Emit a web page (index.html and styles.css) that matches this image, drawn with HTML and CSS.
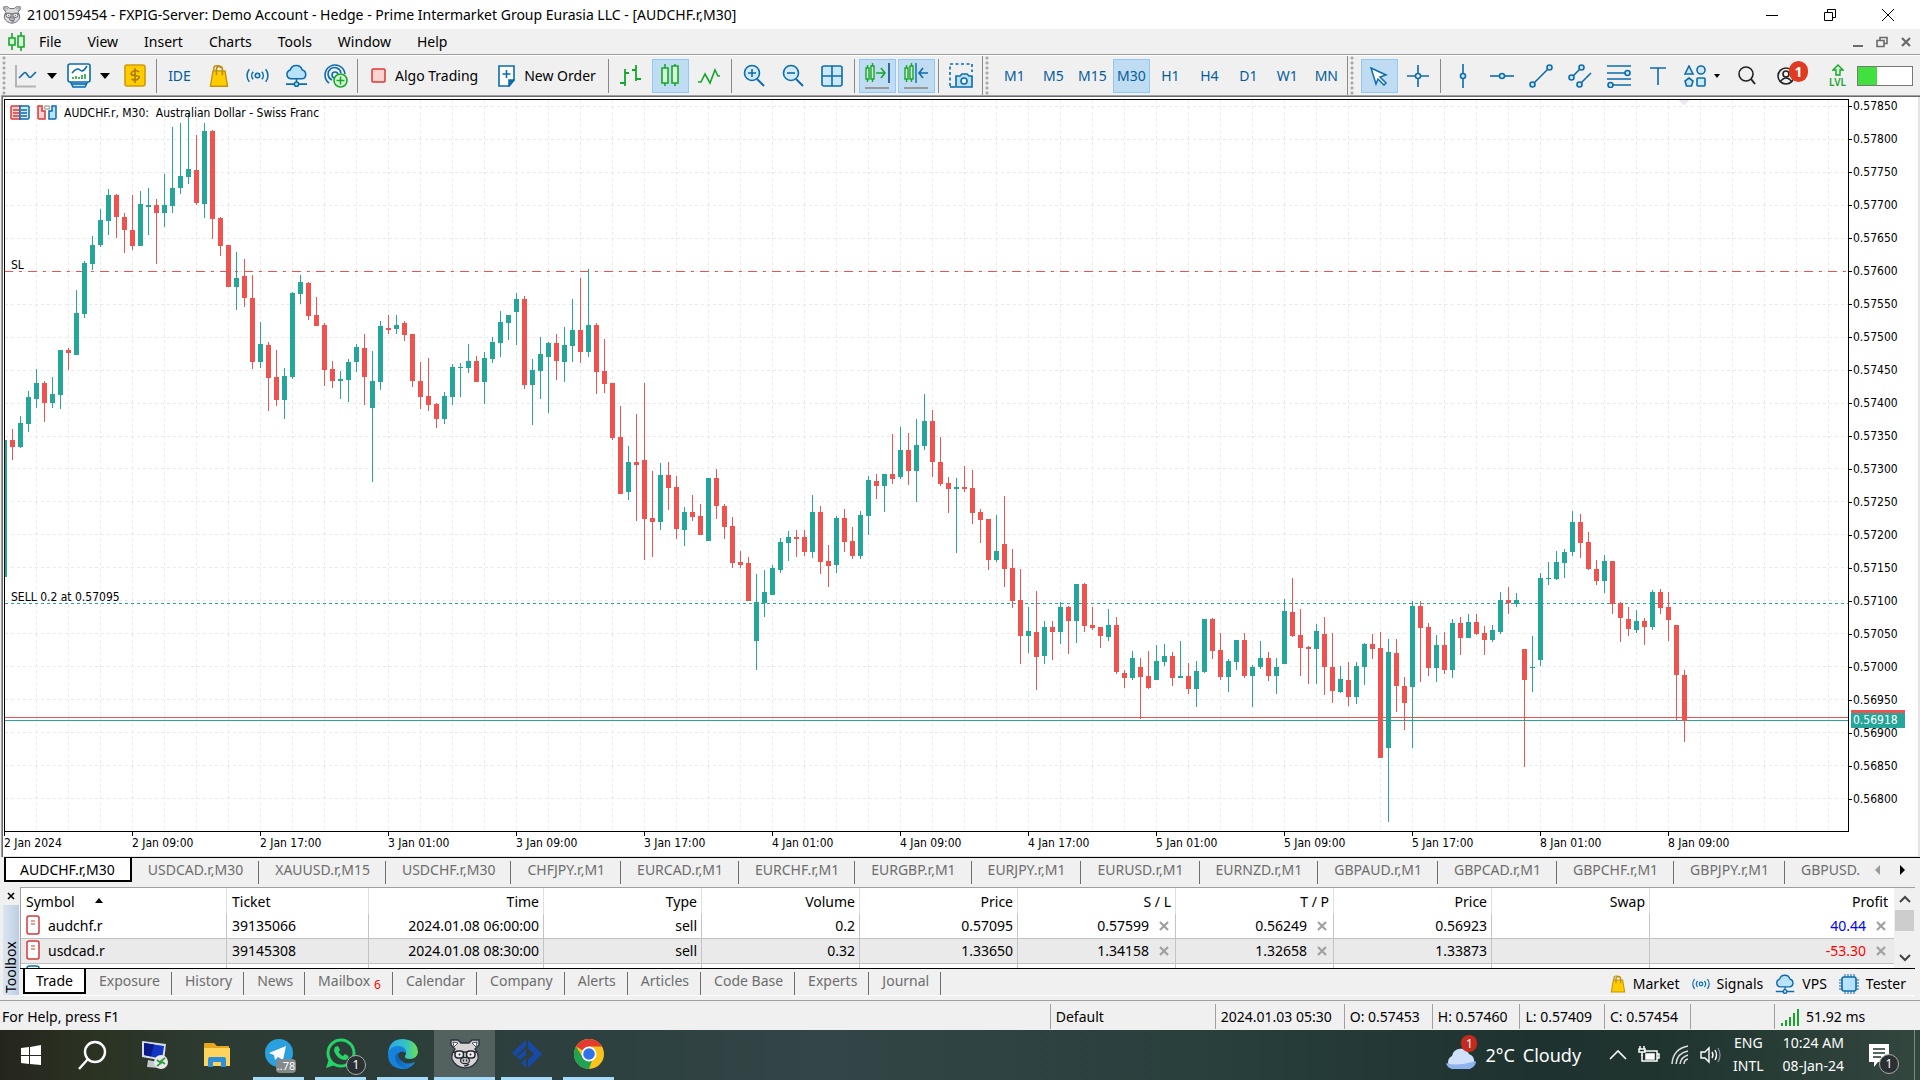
FILE: index.html
```html
<!DOCTYPE html>
<html lang="en">
<head>
<meta charset="utf-8">
<title>2100159454 - FXPIG-Server: Demo Account</title>
<link rel="stylesheet" href="styles.css">
</head>
<body>
<svg class="sprite" aria-hidden="true">
  <symbol id="bag" viewBox="0 0 24 28">
    <path d="M6 10V5q0-3 3-3h2q3 0 3 3" fill="none" stroke="#c4930a" stroke-width="1.800"/>
    <path d="M5 8h14l3 18H2z" fill="#fc0" stroke="#c4930a" stroke-width="1.600"/>
    <path d="M9 13V6q0-3 3-3h1q3 0 3 3v7" fill="none" stroke="#b98a0a" stroke-width="1.800"/>
  </symbol>
  <symbol id="signal" viewBox="0 0 24 24">
    <g fill="none" stroke="#0c6cad" stroke-width="1.6">
      <circle cx="12" cy="12" r="2.4" fill="#cdeafd"/>
      <path d="M7.500 8a6 6 0 0 0 0 8M16.500 8a6 6 0 0 1 0 8M3.500 5.500a10 10 0 0 0 0 13M20.500 5.500a10 10 0 0 1 0 13"/>
    </g>
  </symbol>
  <symbol id="cloud" viewBox="0 0 24 24">
    <path d="M6 15.500a4.800 4.800 0 0 1-.5-9.300 6.500 6.500 0 0 1 12.500 0 4.800 4.800 0 0 1 0 9.300z" fill="#b9e2fd" stroke="#0c6cad" stroke-width="1.600"/>
    <path d="M12 15.500v4M1 21h8.500M14.500 21H23" fill="none" stroke="#0c6cad" stroke-width="1.600"/>
    <circle cx="12" cy="21" r="2.200" fill="#b9e2fd" stroke="#0c6cad" stroke-width="1.600"/>
  </symbol>
  <symbol id="pig" viewBox="0 0 32 34">
    <path d="M2 8L2 3l7 0 3 3h8l3-3 7 0v5l-4 4q4 5 3 10-3 8-13 9-10-1-13-9-1-5 3-10z" fill="#d9d4d4" stroke="#2b3340" stroke-width="1.400"/>
    <path d="M4 5l5 1-4 4zM28 5l-5 1 4 4z" fill="#fff" stroke="#2b3340" stroke-width=".8"/>
    <path d="M4 15h24" stroke="#20262f" stroke-width="1.400"/>
    <rect x="6" y="14" width="8.500" height="7" rx="3" fill="#eee" stroke="#20262f" stroke-width="1.500"/>
    <rect x="17.500" y="14" width="8.500" height="7" rx="3" fill="#eee" stroke="#20262f" stroke-width="1.500"/>
    <circle cx="10.500" cy="17.500" r="1" fill="#20262f"/><circle cx="21.500" cy="17.500" r="1" fill="#20262f"/>
    <ellipse cx="16" cy="23.500" rx="4.500" ry="3.200" fill="#c9c3c3" stroke="#20262f" stroke-width="1.200"/>
    <path d="M14.500 22.500v2M17.500 22.500v2M15 29q3 0 5-2" stroke="#20262f" stroke-width="1.200" fill="none"/>
  </symbol>
  <symbol id="cross" viewBox="0 0 10 10"><path d="M1 1l8 8M9 1l-8 8" stroke="#a0a0a0" stroke-width="2.200"/></symbol>
  <symbol id="doc" viewBox="0 0 14 20"><rect x="1" y="1" width="12" height="18" rx="2" fill="#fff" stroke="#d63a3a" stroke-width="1.500"/><path d="M5 6h4M5 9h4" stroke="#d63a3a" stroke-width="1.200"/></symbol>
</svg>

<header class="titlebar">
  <svg class="app-icon" width="20" height="20"><use href="#pig"/></svg>
  <h1>2100159454 - FXPIG-Server: Demo Account - Hedge - Prime Intermarket Group Eurasia LLC - [AUDCHF.r,M30]</h1>
  <div class="window-controls">
    <button aria-label="Minimize"><svg width="14" height="14"><path d="M1 7.500h12" stroke="#000"/></svg></button>
    <button aria-label="Restore"><svg width="14" height="14" fill="none" stroke="#000"><path d="M1.500 4.500h8v8h-8zM4.500 4V1.500h8v8H10"/></svg></button>
    <button aria-label="Close"><svg width="14" height="14" stroke="#000"><path d="M1 1l12 12M13 1L1 13"/></svg></button>
  </div>
</header>

<nav class="menubar">
  <svg width="17" height="20" fill="#d4fbd6" stroke="#18a52c" stroke-width="1.600"><path d="M4 1v17M13 0v19"/><path d="M1 6h6v7H1zM10 4h6v11h-6z"/></svg>
  <a href="#">File</a><a href="#">View</a><a href="#">Insert</a><a href="#">Charts</a><a href="#">Tools</a><a href="#">Window</a><a href="#">Help</a>
  <div class="child-controls">
    <button aria-label="Minimize chart"><svg width="12" height="12"><path d="M1 10h10" stroke="#6a6a6a" stroke-width="2"/></svg></button>
    <button aria-label="Restore chart"><svg width="12" height="12" fill="none" stroke="#6a6a6a" stroke-width="1.600"><path d="M1 4.500h7v6H1zM4 4V1.500h7v6H8.500"/></svg></button>
    <button aria-label="Close chart"><svg width="12" height="12"><path d="M2 2l8 8M10 2l-8 8" stroke="#6a6a6a" stroke-width="2.200"/></svg></button>
  </div>
</nav>

<div class="toolbar">
  <span class="handle"></span>
  <button class="drop" aria-label="New chart"><svg width="24" height="26" fill="none"><path d="M2 2v22M1 23.500h21" stroke="#b4b4b4" stroke-width="2"/><path d="M5 15l5-5q1-1 2 0l3 4q1 1 2 0l5-5" stroke="#0c6cad" stroke-width="1.600"/></svg><i class="caret"></i></button>
  <button class="drop" aria-label="Profiles"><svg width="24" height="26" fill="none" stroke="#0c6cad" stroke-width="1.600"><path d="M3 18l3 6h12l3-6" fill="#b9e2fd"/><path d="M5 21h14"/><rect x="1" y="1" width="22" height="18" rx="2" fill="#fff"/><path d="M5 10q5-6 8-3t7-4"/><path d="M6 16v-2M9 16v-3M12 16v-2M15 16v-4M18 16v-5" stroke="#18a52c"/></svg><i class="caret"></i></button>
  <button aria-label="Symbols"><svg width="22" height="24"><rect x="1" y="1" width="20" height="21" rx="2" fill="#fc0" stroke="#d09a0a" stroke-width="1.600"/><path d="M11 4v15M15 8q-4-3-7 0t3 3.500 3.500 3q-3 3-7 .5" fill="none" stroke="#a87b05" stroke-width="1.600"/></svg></button>
  <span class="sep"></span>
  <button class="blue">IDE</button>
  <button aria-label="Market"><svg width="22" height="24"><use href="#bag"/></svg></button>
  <button aria-label="Signals"><svg width="23" height="23"><use href="#signal"/></svg></button>
  <button aria-label="VPS"><svg width="23" height="23"><use href="#cloud"/></svg></button>
  <button aria-label="Community"><svg width="24" height="26" fill="none" stroke="#0c6cad" stroke-width="1.600"><path d="M5 20a10 10 0 1 1 16-9M8 17a6.500 6.500 0 1 1 9-7"/><circle cx="11" cy="12" r="3"/><circle cx="16.500" cy="17.500" r="6.500" fill="#d4fbd6" stroke="#18a52c"/><path d="M16.500 13.500v8M12.500 17.500h8" stroke="#18a52c"/></svg></button>
  <span class="sep"></span>
  <button class="labelled"><svg width="15" height="15"><rect x="1" y="1" width="13" height="13" rx="1" fill="#ffd3cf" stroke="#d63a3a" stroke-width="1.500"/></svg>Algo Trading</button>
  <button class="labelled"><svg width="17" height="22" fill="none" stroke="#0c6cad" stroke-width="1.600"><path d="M1 1h15v14l-5 6H1z" fill="#fff"/><path d="M16 15h-5v6z" fill="#0c6cad"/><path d="M8.500 5v8M4.500 9h8"/></svg>New Order</button>
  <span class="sep"></span>
  <button aria-label="Bars"><svg width="22" height="22" fill="none" stroke="#18a52c" stroke-width="1.800"><path d="M5 4v17M0 18h5M5 8h4M16 0v16M12 5h4M16 14h5"/></svg></button>
  <button class="on" aria-label="Candlesticks"><svg width="20" height="24" fill="#d4fbd6" stroke="#18a52c" stroke-width="1.600"><path d="M5 0v22M15 0v22"/><path d="M2 4h6v15H2zM12 2h6v17h-6z"/></svg></button>
  <button aria-label="Line chart"><svg width="22" height="18" fill="none" stroke="#18a52c" stroke-width="1.600"><path d="M0 15h3l4-8 5 9 5-13 3 6h2"/></svg></button>
  <span class="sep"></span>
  <button aria-label="Zoom in"><svg width="22" height="24" fill="none" stroke="#0c6cad" stroke-width="1.600"><path d="M14 15l7 7" stroke-width="2"/><circle cx="9" cy="9" r="7.500" fill="#d2ecfd"/><path d="M9 5v8M5 9h8"/></svg></button>
  <button aria-label="Zoom out"><svg width="22" height="24" fill="none" stroke="#0c6cad" stroke-width="1.600"><path d="M14 15l7 7" stroke-width="2"/><circle cx="9" cy="9" r="7.500" fill="#d2ecfd"/><path d="M5 9h8"/></svg></button>
  <button aria-label="Tile windows"><svg width="22" height="22" fill="#cfe9fc" stroke="#0c6cad" stroke-width="1.600"><rect x="1" y="1" width="20" height="20" rx="2"/><path d="M11 1v20M1 11h20"/></svg></button>
  <span class="sep"></span>
  <button class="on" aria-label="Auto scroll"><svg width="26" height="26" fill="none" stroke="#18a52c" stroke-width="1.400"><path d="M3.500 2v17M8.500 0v19"/><path d="M2 5h3v11H2zM7 3h3v13H7z" fill="#d4fbd6"/><path d="M12 10h9M17 5l4 5-4 5" stroke-width="1.600"/><path d="M25 0v20" stroke="#0c4c8d" stroke-width="1.600"/><path d="M1 25h24" stroke="#999" stroke-width="2"/></svg></button>
  <button class="on" aria-label="Chart shift"><svg width="26" height="26" fill="none" stroke="#18a52c" stroke-width="1.400"><path d="M3.500 2v17M8.500 0v19"/><path d="M2 5h3v11H2zM7 3h3v13H7z" fill="#d4fbd6"/><path d="M13 0v20" stroke="#0c6cad"/><path d="M25 10h-9M20 5l-4 5 4 5" stroke="#0c6cad" stroke-width="1.600"/><path d="M1 25h24" stroke="#999" stroke-width="2"/></svg></button>
  <span class="sep"></span>
  <button aria-label="Screenshot"><svg width="24" height="26" fill="none" stroke="#0c6cad" stroke-width="1.600"><path d="M1 23V1h22v8" stroke-dasharray="3 2.500"/><path d="M1 24h5" /><path d="M7 13h4l2-2h5l2 2h3v11H7z" fill="#b9e2fd"/><circle cx="15" cy="18" r="3" fill="#fff"/></svg></button>
  <span class="sep full"></span>
  <span class="handle"></span>
  <button class="blue">M1</button><button class="blue">M5</button><button class="blue">M15</button><button class="blue on">M30</button><button class="blue">H1</button><button class="blue">H4</button><button class="blue">D1</button><button class="blue">W1</button><button class="blue">MN</button>
  <span class="sep full"></span>
  <span class="handle"></span>
  <button class="on" aria-label="Cursor"><svg width="18" height="20"><path d="M1 2l15 7-6 2 6 6-2 2-6-6-2 5z" fill="#fff" stroke="#0c6cad" stroke-width="1.500"/></svg></button>
  <button aria-label="Crosshair"><svg width="22" height="22" fill="#fff" stroke="#0c6cad" stroke-width="1.600"><path d="M11 0v22M0 11h22"/><circle cx="11" cy="11" r="2.500"/></svg></button>
  <span class="sep"></span>
  <button aria-label="Vertical line"><svg width="22" height="24" fill="#cfe9fc" stroke="#0c6cad" stroke-width="1.600"><path d="M11 0v24"/><circle cx="11" cy="12" r="2.500"/></svg></button>
  <button aria-label="Horizontal line"><svg width="24" height="22" fill="#cfe9fc" stroke="#0c6cad" stroke-width="1.600"><path d="M0 11h24"/><circle cx="12" cy="11" r="2.500"/></svg></button>
  <button aria-label="Trend line"><svg width="24" height="24" fill="#cfe9fc" stroke="#0c6cad" stroke-width="1.600"><path d="M3 21L21 3"/><circle cx="3.500" cy="20.500" r="2.500"/><circle cx="20.500" cy="3.500" r="2.500"/></svg></button>
  <button aria-label="Channel"><svg width="24" height="24" fill="#cfe9fc" stroke="#0c6cad" stroke-width="1.600"><path d="M3 14L14 3M11 21L23 9"/><circle cx="3.500" cy="13.500" r="2.500"/><circle cx="13.500" cy="3.500" r="2.500"/><circle cx="11.500" cy="20.500" r="2.500"/></svg></button>
  <button aria-label="Fibonacci"><svg width="24" height="24" fill="#cfe9fc" stroke="#0c6cad" stroke-width="1.600"><path d="M0 2h24M0 9h20M0 15h24M4 21h20"/><circle cx="20.500" cy="9" r="2.500"/><circle cx="3.500" cy="21" r="2.500"/></svg></button>
  <button aria-label="Text"><svg width="18" height="18" stroke="#0c6cad" stroke-width="1.600"><path d="M1 1h16M9 1v17"/></svg></button>
  <button class="shapes" aria-label="Objects"><svg width="22" height="22" fill="#cfe9fc" stroke="#0c6cad" stroke-width="1.600"><path d="M5 1l4 8H1zM5 13l4 3-1.500 5h-5L1 16z"/><circle cx="17" cy="5" r="4"/><rect x="13" y="13" width="8" height="8" rx="1"/></svg><i class="caret small"></i></button>
  <div class="tool-end">
    <button aria-label="Search"><svg width="18" height="20" fill="none" stroke="#222" stroke-width="1.600"><circle cx="8" cy="8" r="7"/><path d="M13 13l4 5" stroke-width="2"/></svg></button>
    <button class="account" aria-label="Account, 1 notification"><svg width="18" height="18" fill="none" stroke="#222" stroke-width="1.600"><circle cx="9" cy="9" r="8"/><circle cx="9" cy="7" r="3"/><path d="M3 15q6-8 12 0"/></svg><b>1</b></button>
    <button class="level"><svg width="12" height="12" fill="#d4fbd6" stroke="#18a52c" stroke-width="1.400"><path d="M6 1L1 6h3v5h4V6h3z"/></svg>LVL</button>
    <div class="meter"><span></span></div>
  </div>
</div>

<main class="chart">
  <div class="plot">
    <svg class="canvas" id="canvas" aria-label="AUDCHF.r M30 candlestick chart"></svg>
    <div class="caption">
      <svg width="20" height="16" stroke-width="1.500"><path d="M10 1H2q-1 0-1 1v11q0 1 1 1h8z" fill="#ffd3cf" stroke="#d63a3a"/><path d="M10 1h8q1 0 1 1v11q0 1-1 1h-8z" fill="#d2ecfd" stroke="#0c6cad"/><path d="M3 5h6M3 8h6M3 11h6" stroke="#d63a3a"/><path d="M11 5h6M11 8h6M11 11h6" stroke="#0c6cad"/></svg>
      <svg width="20" height="16" stroke-width="1.500"><path d="M1 1h4v5h3v8H2q-1 0-1-1z" fill="#ffd3cf" stroke="#d63a3a"/><path d="M19 1h-4v5h-3v8h6q1 0 1-1z" fill="#b9e2fd" stroke="#0c6cad"/><rect x="7.500" y="1" width="5" height="3" rx="1" fill="#fff" stroke="#aaa"/></svg>
      <span>AUDCHF.r, M30:&nbsp; Australian Dollar - Swiss Franc</span>
    </div>
  </div>
  <ol class="prices">
    <li>0.57850</li><li>0.57800</li><li>0.57750</li><li>0.57700</li><li>0.57650</li><li>0.57600</li><li>0.57550</li><li>0.57500</li><li>0.57450</li><li>0.57400</li><li>0.57350</li><li>0.57300</li><li>0.57250</li><li>0.57200</li><li>0.57150</li><li>0.57100</li><li>0.57050</li><li>0.57000</li><li>0.56950</li><li>0.56900</li><li>0.56850</li><li>0.56800</li>
    <li class="tag ask" aria-hidden="true"></li><li class="tag bid">0.56918</li>
  </ol>
  <ol class="times">
    <li>2 Jan 2024</li><li>2 Jan 09:00</li><li>2 Jan 17:00</li><li>3 Jan 01:00</li><li>3 Jan 09:00</li><li>3 Jan 17:00</li><li>4 Jan 01:00</li><li>4 Jan 09:00</li><li>4 Jan 17:00</li><li>5 Jan 01:00</li><li>5 Jan 09:00</li><li>5 Jan 17:00</li><li>8 Jan 01:00</li><li>8 Jan 09:00</li>
  </ol>
</main>

<nav class="tabs chart-tabs">
  <a class="active" href="#">AUDCHF.r,M30</a><a href="#">USDCAD.r,M30</a><a href="#">XAUUSD.r,M15</a><a href="#">USDCHF.r,M30</a><a href="#">CHFJPY.r,M1</a><a href="#">EURCAD.r,M1</a><a href="#">EURCHF.r,M1</a><a href="#">EURGBP.r,M1</a><a href="#">EURJPY.r,M1</a><a href="#">EURUSD.r,M1</a><a href="#">EURNZD.r,M1</a><a href="#">GBPAUD.r,M1</a><a href="#">GBPCAD.r,M1</a><a href="#">GBPCHF.r,M1</a><a href="#">GBPJPY.r,M1</a><a href="#">GBPUSD.</a>
  <div class="scrollers">
    <button aria-label="Scroll left"><svg width="6" height="10"><path d="M5 0v10L0 5z" fill="#999"/></svg></button>
    <button aria-label="Scroll right"><svg width="6" height="10"><path d="M1 0v10l5-5z" fill="#000"/></svg></button>
  </div>
</nav>

<section class="toolbox">
  <div class="side">
    <button aria-label="Close toolbox"><svg width="8" height="8"><path d="M1 1l6 6M7 1L1 7" stroke="#000" stroke-width="1.600"/></svg></button>
    <span>Toolbox</span>
  </div>
  <div class="body">
    <div class="sheet">
      <table>
        <colgroup><col class="c-symbol"><col class="c-ticket"><col class="c-time"><col class="c-num"><col class="c-num"><col class="c-num"><col class="c-num"><col class="c-num"><col class="c-num"><col class="c-num"><col></colgroup>
        <thead><tr><th>Symbol<i class="sort"></i></th><th>Ticket</th><th>Time</th><th>Type</th><th>Volume</th><th>Price</th><th>S / L</th><th>T / P</th><th>Price</th><th>Swap</th><th>Profit</th></tr></thead>
        <tbody>
          <tr><td><svg width="14" height="20"><use href="#doc"/></svg>audchf.r</td><td>39135066</td><td>2024.01.08 06:00:00</td><td>sell</td><td>0.2</td><td>0.57095</td><td>0.57599<svg class="x"><use href="#cross"/></svg></td><td>0.56249<svg class="x"><use href="#cross"/></svg></td><td>0.56923</td><td></td><td class="gain">40.44<svg class="x"><use href="#cross"/></svg></td></tr>
          <tr><td><svg width="14" height="20"><use href="#doc"/></svg>usdcad.r</td><td>39145308</td><td>2024.01.08 08:30:00</td><td>sell</td><td>0.32</td><td>1.33650</td><td>1.34158<svg class="x"><use href="#cross"/></svg></td><td>1.32658<svg class="x"><use href="#cross"/></svg></td><td>1.33873</td><td></td><td class="loss">-53.30<svg class="x"><use href="#cross"/></svg></td></tr>
          <tr class="peek"><td><svg width="14" height="4"><path d="M1 4q0-2 3-2h6q3 0 3 2" fill="none" stroke="#0c6cad" stroke-width="1.500"/></svg></td><td></td><td></td><td></td><td></td><td></td><td></td><td></td><td></td><td></td><td></td></tr>
        </tbody>
      </table>
      <div class="scrollbar">
        <svg width="12" height="8"><path d="M1 7l5-5 5 5" fill="none" stroke="#444" stroke-width="2"/></svg>
        <span></span>
        <svg width="12" height="8"><path d="M1 1l5 5 5-5" fill="none" stroke="#444" stroke-width="2"/></svg>
      </div>
    </div>
    <nav class="tabs box-tabs">
      <a class="active" href="#">Trade</a><a href="#">Exposure</a><a href="#">History</a><a href="#">News</a><a href="#">Mailbox<sub>6</sub></a><a href="#">Calendar</a><a href="#">Company</a><a href="#">Alerts</a><a href="#">Articles</a><a href="#">Code Base</a><a href="#">Experts</a><a href="#">Journal</a>
      <div class="links">
        <button><svg width="16" height="20"><use href="#bag"/></svg>Market</button>
        <button><svg width="18" height="18"><use href="#signal"/></svg>Signals</button>
        <button><svg width="20" height="20"><use href="#cloud"/></svg>VPS</button>
        <button><svg width="20" height="20"><path d="M6 0v20M9 0v20M12 0v20M15 0v20M0 6h20M0 9h20M0 12h20M0 15h20" stroke="#0c6cad"/><rect x="3" y="3" width="14" height="14" rx="2" fill="#b9e2fd" stroke="#0c6cad" stroke-width="1.600"/></svg>Tester</button>
      </div>
    </nav>
  </div>
</section>

<footer class="status">
  <span class="help">For Help, press F1</span><span class="profile">Default</span><span>2024.01.03 05:30</span><span>O: 0.57453</span><span>H: 0.57460</span><span>L: 0.57409</span><span>C: 0.57454</span><span class="blank"></span>
  <span class="ping"><svg width="18" height="18" stroke="#18a52c" stroke-width="2"><path d="M1 18v-3M5 18v-6M9 18V9M13 18V5M17 18V1"/></svg>51.92 ms</span>
</footer>

<div class="taskbar">
  <div class="apps">
    <button aria-label="Start"><svg width="20" height="20" fill="#fff"><path d="M0 3l8-1v8H0zM9 2l11-2v10H9zM0 11h8v8l-8-1zM9 11h11v9L9 19z"/></svg></button>
    <button aria-label="Search"><svg width="30" height="30" fill="none" stroke="#fff" stroke-width="2.400"><circle cx="17" cy="12" r="10"/><path d="M10 19l-9 10"/></svg></button>
    <button aria-label="Remote Desktop"><svg width="30" height="30"><path d="M2 1l24 3-2 17L2 17z" fill="#d5dde8"/><path d="M4 3l20 3-2 13L4 15z" fill="#1335c4"/><path d="M4 3l10 1.500-3 12L4 15z" fill="#0a1a86"/><path d="M8 20l10 2 1 6-12-1z" fill="#c3c8cd"/><circle cx="21" cy="22" r="7" fill="#e8e8e8"/><path d="M17 20l4 3-4 3M25 18l-4 3 4 3" fill="none" stroke="#2b9a3a" stroke-width="1.600"/></svg></button>
    <button aria-label="File Explorer"><svg width="28" height="26"><path d="M1 2q0-1 1-1h9l3 3h12v5H1z" fill="#e6a51c"/><path d="M1 6h26v18H1z" fill="#ffd45c"/><path d="M5 25v-8q0-2 2-2h14q2 0 2 2v8h-5v-5h-8v5z" fill="#2b8fdc"/></svg></button>
    <button class="run" aria-label="Telegram"><svg width="36" height="34"><circle cx="18" cy="16" r="14" fill="#2aa1de"/><path d="M8 16l17-7-3 14-5-3-3 3-1-5z" fill="#fff"/></svg><b class="pill">..78</b></button>
    <button class="run" aria-label="WhatsApp"><svg width="36" height="34"><circle cx="18" cy="16" r="13" fill="none" stroke="#25d366" stroke-width="3"/><path d="M3 31l3-9 6 6z" fill="#25d366"/><path d="M12 10l3-1 2 4-1.500 2q2 3 4.500 4l2-2 3.500 2q0 3-3 4-8 0-11.500-9 0-2 1-4z" fill="#25d366"/></svg><b class="count">1</b></button>
    <button class="run" aria-label="Edge">
      <svg width="32" height="32">
        <defs>
          <linearGradient id="edge-top"><stop offset="0" stop-color="#2aa8e8"/><stop offset=".6" stop-color="#35c3c4"/><stop offset="1" stop-color="#6be04f"/></linearGradient>
          <linearGradient id="edge-low"><stop offset="0" stop-color="#0f5fb4"/><stop offset="1" stop-color="#1a8fe0"/></linearGradient>
        </defs>
        <path d="M1 16Q2 1 16 1q14 1 15 13-1 7-8 7-6 0-5-3 3-4-2-7-8-2-15 5z" fill="url(#edge-top)"/>
        <path d="M1 16Q3 8 11 8q8 0 8 7-6-4-8 2-1 9 9 10 4 0 8-3-5 8-14 7Q1 29 1 16z" fill="#1583dc"/>
        <path d="M11 14q-4 3-2 9 3 7 11 7 5-1 8-6-7 3-12 0-6-4-5-10z" fill="url(#edge-low)"/>
      </svg>
    </button>
    <button class="run current" aria-label="FXPIG terminal"><svg width="32" height="34"><use href="#pig"/></svg></button>
    <button class="run" aria-label="Trading app"><svg width="30" height="28" fill="#1749a8"><path d="M14 0v6L4 16l-4-3zM14 9v6l-6 5-3-3zM14 18v10l-5-5zM16 0l14 14-14 14v-8l6-6-6-6z"/></svg></button>
    <button class="run" aria-label="Chrome"><svg width="32" height="32"><circle cx="16" cy="16" r="15" fill="#f9c31b"/><path d="M16 16L3 8.500A15 15 0 0 1 29 8.500H16z" fill="#e33b2e"/><path d="M16 31A15 15 0 0 1 3 8.500l7 11 9 3z" fill="#21a152"/><circle cx="16" cy="16" r="7.500" fill="#fff"/><circle cx="16" cy="16" r="5.800" fill="#2f73e8"/></svg></button>
  </div>
  <div class="tray">
    <button class="weather"><svg width="32" height="32"><path d="M8 30a7 7 0 0 1-1-13 9 9 0 0 1 17-2 8 8 0 0 1 0 15z" fill="#cfe0fa"/><path d="M8 30a7 7 0 0 1-7-6q10 4 30-2a8 8 0 0 1-7 8z" fill="#8fb3ee"/></svg><b>1</b><span>2°C</span><span>Cloudy</span></button>
    <svg width="18" height="12" fill="none" stroke="#fff" stroke-width="1.600"><path d="M1 10l8-8 8 8"/></svg>
    <svg width="22" height="18" fill="none" stroke="#fff" stroke-width="1.500"><path d="M6 5h13v10H4V9M19 8h2v4h-2"/><path d="M8 8h8v5H8z" fill="#fff"/><path d="M2 0v3M6 0v3M1 3h6v3H1zM4 6v4"/></svg>
    <svg width="18" height="20" fill="none" stroke="#ddd" stroke-width="1.500"><path d="M1 19Q2 4 17 1M5 19Q6 8 17 6M9 19q1-7 8-9M13 19q0-4 4-5"/></svg>
    <svg width="22" height="18" fill="none" stroke="#fff" stroke-width="1.400"><path d="M1 6h4l4-4v14l-4-4H1z"/><path d="M12 6q2 3 0 6M15 4q3 5 0 10"/><path d="M18 2q4 7 0 14" stroke="#889"/></svg>
    <div class="stack lang"><span>ENG</span><span>INTL</span></div>
    <div class="stack clock"><span>10:24 AM</span><span>08-Jan-24</span></div>
    <button class="notes" aria-label="Notifications"><svg width="22" height="24"><path d="M1 1h20v18H10l-4 5v-5H1z" fill="#fff"/><path d="M5 6h12M5 10h12M5 14h8" stroke="#24352f" stroke-width="1.400"/></svg><b class="count">1</b></button>
  </div>
</div>
<script src="chart.js"></script>
</body>
</html>
```
FILE: chart.js
```js
// One row per half-hour candle, in plot pixels: direction, high, body top, body bottom, low.
const candles = `
u 340 340 477 477|d 329 340 347 360|u 316 323 347 348|u 291 297 324 332|u 269 283 299 308|d 281 283 303 322
u 277 294 303 308|u 250 250 295 309|d 248 250 253 270|u 190 213 255 255|u 161 163 214 218|u 136 145 164 170
u 109 120 145 147|u 89 95 121 135|d 94 95 117 138|d 113 117 130 153|d 95 130 146 150|u 91 104 146 146
u 88 105 107 135|d 99 105 113 164|u 74 105 113 127|u 27 88 106 113|u 23 76 88 94|u 14 69 77 84
d 35 70 103 105|u 23 31 104 118|d 30 31 119 139|d 117 118 146 156|d 145 145 187 187|u 152 178 187 210
d 159 176 198 207|d 175 198 262 269|u 222 244 262 268|d 242 245 278 311|d 250 277 300 306|u 268 276 300 319
u 192 193 277 279|u 175 182 194 204|d 182 183 216 220|d 197 215 226 226|d 223 225 270 286|d 261 269 281 288
u 271 279 281 299|u 259 262 280 302|u 244 247 262 272|d 234 248 277 305|u 251 281 308 382|u 221 226 282 290
d 215 228 230 234|u 215 225 229 234|d 221 223 235 241|d 234 234 281 287|d 262 281 297 309|d 258 296 305 311
d 303 304 319 328|u 292 296 319 324|u 264 267 297 305|u 263 267 268 297|u 244 261 268 273|d 256 261 282 282
u 252 258 282 304|u 237 242 259 263|u 211 222 243 257|u 215 215 223 240|u 193 199 212 245|d 196 199 285 289
u 259 270 285 325|u 237 254 271 299|u 242 243 257 313|d 234 243 261 280|u 227 245 262 282|u 199 230 246 262
d 178 230 252 263|u 169 225 252 257|d 223 225 272 294|d 239 271 284 293|d 283 283 338 340|d 306 337 394 394
u 346 362 392 400|d 314 362 365 421|d 283 360 419 460|d 371 418 422 457|u 363 375 422 430|d 362 375 388 410
d 376 387 429 439|u 407 412 430 446|d 395 412 417 421|d 404 416 435 435|u 378 378 441 441|d 369 378 406 419
d 404 406 427 439|d 417 426 463 468|d 451 462 465 468|d 457 463 501 501|u 474 502 541 570|u 470 492 503 517
u 465 468 495 495|u 438 442 470 473|u 431 437 443 461|d 430 437 439 457|d 430 437 452 456|u 395 412 452 458
d 406 412 462 474|d 445 461 466 487|u 416 418 465 473|d 409 418 442 452|d 427 441 456 459|u 411 415 456 459
u 376 380 416 435|d 374 381 386 399|u 374 374 386 412|d 334 374 379 384|u 327 350 377 379|d 333 350 371 385
u 319 345 371 402|u 294 321 346 350|d 310 321 362 377|d 337 362 384 386|d 377 383 389 413|u 378 387 389 453
d 366 387 389 392|d 370 388 413 424|d 409 412 420 443|d 419 419 460 470|u 415 451 460 462|d 396 444 469 487
d 449 468 501 508|d 469 500 536 564|u 507 531 536 553|d 491 532 557 590|u 521 527 556 564|d 521 527 532 560
u 502 507 532 544|d 506 507 521 554|u 484 484 521 543|d 483 484 526 532|d 507 525 528 530|d 527 527 536 548
u 509 525 537 541|d 517 525 572 574|d 570 573 578 588|u 551 558 578 580|d 558 567 577 619|d 551 576 588 589
u 545 561 580 580|u 544 556 562 566|d 552 556 578 586|u 541 576 578 578|d 563 576 589 594|u 561 571 589 607
u 519 519 572 573|d 518 519 551 559|d 533 550 577 580|u 559 561 577 592|u 540 540 562 570|d 533 540 576 578
u 565 567 576 607|u 541 558 567 569|d 552 558 576 581|u 558 567 576 594|u 499 511 564 564|d 478 512 536 537
d 509 535 548 576|d 546 547 549 584|u 524 531 549 584|d 517 534 567 595|d 533 567 591 603|u 566 579 592 593
d 562 580 597 606|u 562 566 597 604|u 543 544 567 585|d 534 544 549 559|d 532 548 658 658|u 539 552 648 722
d 539 553 586 612|d 577 586 603 630|u 501 506 587 648|d 501 506 528 582|d 523 527 568 576|u 535 545 568 582
d 532 545 570 574|u 519 523 570 578|d 517 523 538 555|u 514 522 538 538|d 514 522 534 535|d 526 533 540 555
u 525 530 540 542|u 492 500 532 534|d 487 500 503 514|u 493 500 504 507|d 549 549 580 667|u 536 567 568 592
u 473 478 560 566|u 462 478 479 485|u 451 462 479 480|u 449 452 463 478|u 411 422 452 456|d 414 422 443 458
d 432 442 469 470|d 460 469 481 485|u 455 461 481 493|d 461 461 504 514|d 502 503 518 542|d 507 519 529 536
u 510 521 530 533|d 518 521 527 545|u 490 492 527 530|d 489 492 508 514|d 492 507 520 541|d 525 525 575 621
d 570 575 621 642`.trim().split(/[|\n]/).map(row => row.split(' '));

const STEP = 8;
const parts = [];
const line = (cls, x1, y1, x2, y2) =>
  parts.push(`<line class="${cls}" x1="${x1}" y1="${y1}" x2="${x2}" y2="${y2}"/>`);
const rect = (cls, x, y, w, h) =>
  parts.push(`<rect class="${cls}" x="${x}" y="${y}" width="${w}" height="${h}"/>`);

for (let x = 31.5; x < 4000; x += 32) line('grid', x, 0, x, '100%');
for (let k = 0; k < 22; k++) {
  const y = Math.round(6 + 32.95 * k) + 0.5;
  line('grid', 0, y, '100%', y);
}
parts.push('<path class="shift" d="M1674 0h10l-5 6z"/>');
line('stop', 0, 171.5, '100%', 171.5);
line('entry', 0, 503.5, '100%', 503.5);
line('ask-line', 0, 617.5, '100%', 617.5);
line('bid-line', 0, 620.5, '100%', 620.5);

candles.forEach(([dir, high, top, bottom, low], i) => {
  rect(dir, STEP * i - 1, high, 1, low - high);
  rect(dir, STEP * i - 3, top, 5, bottom - top);
});
parts.push('<text x="6" y="169">SL</text><text x="6" y="501">SELL 0.2 at 0.57095</text>');
document.getElementById('canvas').innerHTML = parts.join('');
```
FILE: styles.css
```css
* { box-sizing: border-box; }
body {
  margin: 0;
  min-height: 100vh;
  display: flex;
  flex-direction: column;
  background: #f0f0f0;
  color: #000;
  font: 14px/20px "Noto Sans", "Open Sans", sans-serif;
  overflow-x: hidden;
  white-space: nowrap;
}
button { border: 0; padding: 0; background: none; font: inherit; color: inherit; display: flex; align-items: center; justify-content: center; }
a { color: inherit; text-decoration: none; }
svg { display: block; flex: none; }
ol { list-style: none; margin: 0; padding: 0; }
.sprite { position: absolute; width: 0; height: 0; }

.titlebar { height: 29px; background: #fff; display: flex; align-items: center; padding: 0 3px 0 2px; }
.titlebar h1 { margin: 0 0 0 5px; font-size: 14px; font-weight: 400; flex: 1; }
.app-icon { opacity: .8; }
.window-controls { display: flex; }
.window-controls button { width: 58px; height: 29px; }

.menubar { height: 26px; border-bottom: 1px solid #a0a0a0; display: flex; align-items: center; padding-left: 8px; }
.menubar a { padding: 0 13px; }
.menubar svg + a { margin-left: 1px; }
.child-controls { display: flex; margin-left: auto; padding-right: 2px; }
.child-controls button { width: 24px; height: 24px; }

.toolbar { height: 40px; display: flex; align-items: center; gap: 2px; padding-left: 2px; border-top: 1px solid #fff; }
.toolbar button { width: 37px; height: 34px; border: 1px solid transparent; flex: none; }
.toolbar .on { background: #c0dcf3; border-color: #90c8f6; }
.toolbar .blue { color: #045c9c; }
.toolbar .drop { width: 51px; gap: 9px; }
.toolbar .labelled { width: auto; gap: 9px; padding: 0 8px; }
.toolbar .shapes { width: 47px; gap: 8px; }
.handle { width: 4px; margin-right: 2px; align-self: stretch; background: radial-gradient(circle at 2px 2px, #a8a8a8 1px, transparent 2px) 0 0 / 4px 5px; }
.sep + .handle { margin-right: 5px; }
.sep { width: 1px; height: 34px; background: #8a8a8a; margin: 0 2px 0 1px; }
.sep.full { height: 39px; margin: 0; }
.caret { border: 5px solid transparent; border-top: 6px solid #000; border-bottom: 0; }
.caret.small { border-width: 4px 3px 0; }
.tool-end { display: flex; align-items: center; margin-left: auto; padding-right: 7px; }
.toolbar .account { width: 54px; position: relative; padding-right: 12px; }
.account b { position: absolute; left: 23px; top: 1px; width: 19px; height: 21px; border-radius: 10px; background: #e03a20; color: #fff; font: 700 14px/21px "Noto Sans", sans-serif; }
.toolbar .level { flex-direction: column; font-size: 10px; line-height: 10px; color: #18a52c; font-weight: 600; margin-right: 1px; gap: 1px; }
.meter { width: 56px; height: 20px; border: 1px solid #777; background: #fff; }
.meter span { display: block; width: 36%; height: 18px; background: #40e040; }

.chart {
  flex: 1;
  min-height: 760px;
  margin-left: 1px;
  border: solid #a0a0a0;
  border-width: 1px 0 0 1px;
  box-shadow: inset 1px 1px #696969, inset -2px -1px #e3e3e3;
  padding: 3px 0 0 2px;
  background: #fff;
  display: grid;
  grid-template: minmax(0, 1fr) 25px / minmax(0, 1fr) 71px;
  font: 12px/15px "DejaVu Sans Condensed", "Noto Sans", sans-serif;
}
.plot { border: 1px solid #000; position: relative; }
.canvas { width: 100%; height: 100%; position: absolute; inset: 0; shape-rendering: crispEdges; }
.canvas line { fill: none; stroke-width: 1; }
.grid { stroke: #ebe9ec; stroke-dasharray: 3 3; }
.stop { stroke: #ef5350; stroke-dasharray: 9 6 3 6; stroke-dashoffset: 1; }
.entry { stroke: #26a69a; stroke-dasharray: 3 3; }
.ask-line { stroke: #ef5350; }
.bid-line { stroke: #26a69a; }
.u { fill: #26a69a; }
.d { fill: #ef5350; }
.shift { fill: #efe4ef; }
.caption { position: absolute; left: 5px; top: 5px; display: flex; gap: 7px; align-items: center; }
.caption span { padding-top: 1px; }
.prices { position: relative; display: flex; flex-direction: column; gap: 18px; }
.prices li { display: flex; align-items: center; gap: 1px; }
.prices li:not(.tag)::before { content: ""; width: 3px; height: 1px; background: #000; }
.tag { position: absolute; left: 2px; top: 611px; width: 54px; height: 15px; background: #ef5350; color: #fff; padding-left: 2px; }
.tag.bid { top: 614px; background: #26a69a; }
.times { grid-column: 1 / -1; display: flex; overflow: hidden; }
.times li { width: 128px; flex: none; }
.times li::before { content: ""; display: block; width: 1px; height: 4px; background: #000; }

.tabs { display: flex; color: #6d6d6d; }
.tabs a { position: relative; line-height: 24px; }
.tabs a + a::after { content: ""; position: absolute; right: 0; top: 3px; height: 23px; width: 1px; background: #6d6d6d; }
.tabs .active { background: #fff; color: #000; border: solid #000; border-width: 0 2px 2px; }
.chart-tabs { height: 30px; margin-left: 4px; border-top: 1px solid #000; overflow: hidden; padding-bottom: 5px; }
.chart-tabs a { padding: 0 16px; }
.chart-tabs a.active { padding: 0 15px 0 14px; }
.chart-tabs a:last-of-type { padding-right: 0; }
.chart-tabs a:last-of-type::after { display: none; }
.scrollers { display: flex; margin-left: auto; padding-right: 6px; align-self: center; }
.scrollers button { width: 24px; }

.toolbox { display: flex; height: 114px; border-bottom: 1px solid #a0a0a0; }
.side { width: 20px; padding: 5px 1px 5px 3px; display: flex; flex-direction: column; align-items: center; gap: 5px; }
.side span { flex: 1; width: 16px; background: linear-gradient(90deg, #bdcde2, #dce6f2); writing-mode: vertical-rl; transform: rotate(180deg); line-height: 16px; padding-top: 2px; }
.body { flex: 1; min-width: 0; padding-right: 5px; }
.sheet { display: flex; border-top: 1px solid #a0a0a0; border-left: 1px solid #a0a0a0; background: #fff; height: 81px; overflow: hidden; }
table { flex: 1; width: 100%; table-layout: fixed; border-collapse: separate; border-spacing: 0; }
.c-symbol { width: 206px; }
.c-ticket { width: 142px; }
.c-time { width: 175px; }
.c-num { width: 158px; }
th, td { font-weight: 400; text-align: right; padding: 0 4px 0 5px; border-right: 1px solid #c4c4c4; overflow: hidden; line-height: 24px; height: 25px; }
th { height: 26px; border-color: #e0e0e0; padding-top: 2px; }
th:nth-child(-n+2), td:nth-child(-n+2) { text-align: left; }
th:last-child, td:last-child { border-right: 0; padding-right: 6px; }
td { border-bottom: 1px solid #c0c0c0; }
tbody tr:nth-child(2) { background: #eaeaea; }
td:first-child svg { float: left; margin: 1px 8px 0 0; }
.peek td { height: 4px; line-height: 4px; border-bottom: 0; }
.peek td:first-child svg { margin: 0; }
.x { display: inline-block; width: 10px; height: 10px; margin: 0 2px 0 10px; }
.gain { color: #00f; }
.loss { color: #f00; }
.sort { display: inline-block; margin-left: 20px; border: 4px solid transparent; border-top: 0; border-bottom: 5px solid #000; vertical-align: 4px; }
.scrollbar { width: 21px; padding: 7px 0 6px; display: flex; flex-direction: column; align-items: center; justify-content: space-between; background: #f0f0f0; }
.scrollbar span { width: 19px; height: 21px; background: #cdcdcd; margin-bottom: 16px; }
.box-tabs { border-top: 1px solid #000; border-bottom: 1px solid #fff; height: 28px; padding-left: 3px; }
.box-tabs a { padding: 0 12px 0 13px; }
.box-tabs .active { height: 25px; padding: 0 11px; }
.box-tabs sub { color: #f00; font-size: 12px; line-height: 12px; vertical-align: -3px; margin-left: 4px; }
.links { display: flex; gap: 12px; margin-left: auto; padding: 3px 9px 0 0; color: #000; }
.links button { gap: 7px; height: 24px; }

.status { display: flex; height: 29px; padding: 3px 0 1px; line-height: 25px; }
.status span { padding: 0 12px 0 5px; border-left: 1px solid #a0a0a0; }
.status .help { flex: 1; border: 0; padding-left: 2px; }
.status .profile { width: 165px; }
.status .blank { width: 84px; }
.status .ping { width: 146px; display: flex; align-items: center; gap: 7px; padding-left: 6px; }

.taskbar { height: 50px; display: flex; justify-content: space-between; color: #fff; background: linear-gradient(90deg, #25251d 0, #2b3323 5%, #2c3c34 12%, #2d4040 30%, #334546 43%, #2a403d 62%, #1e332f 80%, #1f332f 86%, #33473f 100%); }
.apps { display: flex; gap: 11px; padding-left: 5px; }
.apps button { width: 51px; position: relative; }
.apps .run { border-bottom: 3px solid #a6dcfa; }
.apps .current { width: 61px; margin: 0 -5px; background: #53625f; }
.pill, .count { position: absolute; font-size: 12px; font-weight: 400; }
.pill { left: 23px; top: 29px; width: 20px; font-size: 11px; line-height: 14px; border-radius: 4px; background: #84898b; }
.count { left: 31px; top: 25px; width: 20px; height: 20px; border-radius: 10px; border: 1px solid #aaa; background: #2b3033; line-height: 18px; }
.tray { display: flex; align-items: center; gap: 11px; padding-right: 5px; }
.weather { position: relative; font-size: 18px; gap: 8px; margin-right: 17px; }
.weather b { position: absolute; left: 16px; top: -4px; width: 16px; height: 17px; border-radius: 8px; background: #c42b1c; font: 12px/17px "Noto Sans", sans-serif; }
.stack { display: flex; flex-direction: column; align-items: center; line-height: 28px; height: 50px; padding-bottom: 6px; justify-content: center; }
.stack span { height: 23px; }
.clock { margin-left: 8px; }
.notes { position: relative; width: 60px; height: 50px; border-right: 1px solid #7c8985; padding-right: 12px; }
.notes .count { left: 24px; top: 24px; }
```
